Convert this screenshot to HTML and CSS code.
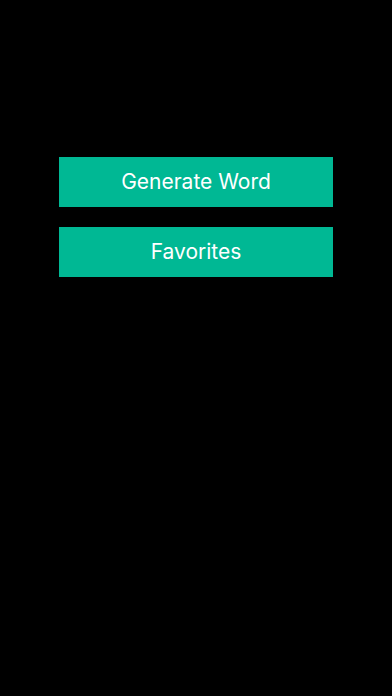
FILE: index.html
```html
<!DOCTYPE html>
<html>
<head>
<meta charset="utf-8">
<link rel="stylesheet" href="styles.css">
</head>
<body>
<main class="screen">
  <div class="menu">
    <button class="btn">Generate Word</button>
    <button class="btn">Favorites</button>
  </div>
</main>
</body>
</html>
```
FILE: styles.css
```css
html, body {
  margin: 0;
  padding: 0;
  background: #000;
}
.screen {
  width: 392px;
  height: 696px;
  background: #000;
  padding-top: 157px;
  box-sizing: border-box;
}
.menu {
  display: flex;
  flex-direction: column;
  gap: 20px;
  margin-left: 59px;
  width: 274px;
}
.btn {
  height: 50px;
  border: 0;
  margin: 0;
  padding: 0 0 2px 0;
  background: #00b894;
  color: #fff;
  font-family: Inter, Roboto, "Liberation Sans", sans-serif;
  font-size: 21px;
  font-weight: 400;
}
```
